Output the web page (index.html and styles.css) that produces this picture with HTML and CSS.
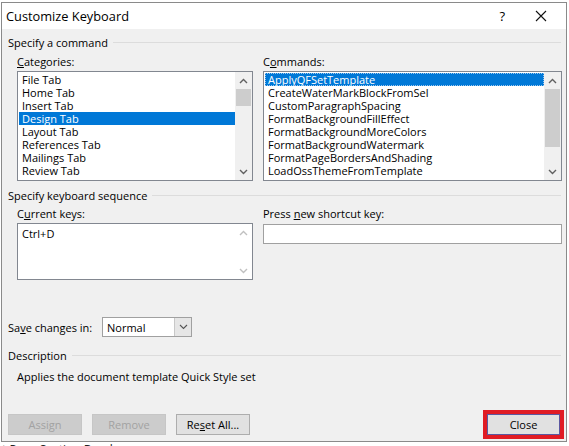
FILE: index.html
```html
<!DOCTYPE html>
<html>
<head>
<meta charset="utf-8">
<link rel="stylesheet" href="styles.css">
</head>
<body>
<div class="screen">
  <div class="window">
    <div class="titlebar">
      <span class="title">Customize Keyboard</span>
      <span class="help">?</span>
      <svg class="closex" width="12" height="12" viewBox="0 0 12 12"><path d="M1 1 L11 11 M11 1 L1 11" stroke="#111" stroke-width="1.1" fill="none"/></svg>
    </div>
    <div class="body">
      <div class="group g1"><span>Specify a command</span><i></i></div>
      <div class="cols">
        <div class="col">
          <div class="label"><u>C</u>ategories:</div>
          <div class="list tall">
            <div class="items">
              <div class="item">File Tab</div>
              <div class="item">Home Tab</div>
              <div class="item">Insert Tab</div>
              <div class="item sel">Design Tab</div>
              <div class="item">Layout Tab</div>
              <div class="item">References Tab</div>
              <div class="item">Mailings Tab</div>
              <div class="item">Review Tab</div>
            </div>
            <div class="sbar">
              <div class="arrow"><svg width="9" height="6" viewBox="0 0 9 6"><path d="M1 5 L4.5 1.5 L8 5" stroke="#606060" stroke-width="1.4" fill="none"/></svg></div>
              <div class="track"><div class="thumb small"></div></div>
              <div class="arrow"><svg width="9" height="6" viewBox="0 0 9 6"><path d="M1 1 L4.5 4.5 L8 1" stroke="#606060" stroke-width="1.4" fill="none"/></svg></div>
            </div>
          </div>
        </div>
        <div class="col">
          <div class="label">C<u>o</u>mmands:</div>
          <div class="list tall">
            <div class="items">
              <div class="item sel focus">ApplyQFSetTemplate</div>
              <div class="item">CreateWaterMarkBlockFromSel</div>
              <div class="item">CustomParagraphSpacing</div>
              <div class="item">FormatBackgroundFillEffect</div>
              <div class="item">FormatBackgroundMoreColors</div>
              <div class="item">FormatBackgroundWatermark</div>
              <div class="item">FormatPageBordersAndShading</div>
              <div class="item">LoadOssThemeFromTemplate</div>
            </div>
            <div class="sbar">
              <div class="arrow"><svg width="9" height="6" viewBox="0 0 9 6"><path d="M1 5 L4.5 1.5 L8 5" stroke="#606060" stroke-width="1.4" fill="none"/></svg></div>
              <div class="track"><div class="thumb big"></div></div>
              <div class="arrow"><svg width="9" height="6" viewBox="0 0 9 6"><path d="M1 1 L4.5 4.5 L8 1" stroke="#606060" stroke-width="1.4" fill="none"/></svg></div>
            </div>
          </div>
        </div>
      </div>

      <div class="group g2"><span>Specify keyboard sequence</span><i></i></div>
      <div class="cols keys">
        <div class="col">
          <div class="label">C<u>u</u>rrent keys:</div>
          <div class="list short">
            <div class="items">
              <div class="item">Ctrl+D</div>
            </div>
            <div class="sbar plain">
              <div class="arrow"><svg width="9" height="6" viewBox="0 0 9 6"><path d="M1 5 L4.5 1.5 L8 5" stroke="#c0c0c0" stroke-width="1.4" fill="none"/></svg></div>
              <div class="track"></div>
              <div class="arrow"><svg width="9" height="6" viewBox="0 0 9 6"><path d="M1 1 L4.5 4.5 L8 1" stroke="#c0c0c0" stroke-width="1.4" fill="none"/></svg></div>
            </div>
          </div>
        </div>
        <div class="col">
          <div class="label">Press <u>n</u>ew shortcut key:</div>
          <div class="input"></div>
        </div>
      </div>

      <div class="saverow">
        <span class="savelabel">Sa<u>v</u>e changes in:</span>
        <div class="select">
          <span class="selval">Normal</span>
          <span class="dd"><svg width="9" height="6" viewBox="0 0 9 6"><path d="M1 1 L4.5 4.5 L8 1" stroke="#555" stroke-width="1.1" fill="none"/></svg></span>
        </div>
      </div>

      <div class="group g3"><span>Description</span><i></i></div>
      <div class="desc">Applies the document template Quick Style set</div>

      <div class="buttons">
        <div class="left">
          <div class="btn disabled">Assign</div>
          <div class="btn disabled">Remove</div>
          <div class="btn">Re<u>s</u>et All...</div>
        </div>
        <div class="btn close">Close</div>
      </div>
    </div>
  </div>
  <div class="behind">t Page Section Breaks</div>
</div>
</body>
</html>
```

FILE: styles.css
```css
* { box-sizing: border-box; }
html, body { margin: 0; padding: 0; background: #fff; }
.screen {
  width: 569px; height: 446px; overflow: hidden; background: #fff;
  font-family: "Open Sans", "Noto Sans", sans-serif; font-size: 11px; color: #000;
}
.window {
  margin: 2px 0 0 1px; width: 566px; height: 440px;
  border: 1px solid #8a8a8a; display: flex; flex-direction: column;
}
.titlebar {
  height: 26px; background: #fff; display: flex; align-items: center; flex: none;
}
.title { font-size: 12.8px; padding-left: 4px; flex: 1; }
.help { font-size: 13px; margin-right: 30px; }
.closex { margin-right: 19px; }
.body { flex: 1; background: #f0f0f0; display: flex; flex-direction: column; padding-right: 5px; }

.group { display: flex; align-items: center; height: 16px; padding-left: 6px; }
.group i { flex: 1; height: 1px; background: #dcdcdc; margin-left: 5px; }
.g1 { margin-top: 5px; }
.g2 { margin-top: 6px; }
.g3 { margin-top: 10px; }

.cols { display: grid; grid-template-columns: 236px 299px; column-gap: 10px; padding-left: 15px; }
.label { height: 16px; line-height: 16px; margin-top: 4px; }
.keys .label { margin-top: 3px; }
.list {
  margin-top: 1px; background: #fff; border: 1px solid #828790; display: flex; padding: 1px 0 0 1px;
}
.list.tall { height: 110px; }
.list.short { height: 57px; }
.items { flex: 1; padding-top: 0; }
.item { height: 13px; line-height: 13px; padding-left: 3px; white-space: nowrap; }
.item.sel { background: #0078d7; color: #fff; }
.item.focus { outline: 1px dotted #9cc8ef; outline-offset: -1px; }
.short .item { line-height: 15px; height: 16px; margin-top: 1px; }

.sbar { width: 17px; display: flex; flex-direction: column; background: #f0f0f0; margin-top: -1px; }
.sbar.plain { background: #fff; }
.arrow { height: 17px; display: flex; align-items: center; justify-content: center; flex: none; }
.track { flex: 1; }
.thumb { background: #cdcdcd; margin: 0 1px; }
.thumb.small { height: 17px; }
.thumb.big { height: 58px; }

.input { margin-top: 2px; height: 20px; background: #fff; border: 1px solid #a0a0a0; }

.saverow { display: flex; align-items: center; padding-left: 6px; margin-top: 37px; height: 20px; }
.savelabel { width: 94px; }
.select {
  width: 90px; height: 20px; background: #fff; border: 1px solid #a0a0a0; display: flex; align-items: center;
}
.selval { flex: 1; padding-left: 4px; }
.dd {
  width: 17px; height: 18px; background: #e6e6e6; border-left: 1px solid #c8c8c8;
  display: flex; align-items: center; justify-content: center;
}

.desc { margin-top: 6px; height: 16px; line-height: 16px; padding-left: 15px; }

.buttons {
  display: flex; justify-content: space-between; align-items: center;
  margin-top: 29px; padding-left: 6px; padding-right: 1px;
}
.left { display: flex; gap: 10px; }
.btn {
  width: 74px; height: 21px; display: flex; align-items: center; justify-content: center;
  background: #e1e1e1; border: 1px solid #adadad;
}
.btn.disabled { background: #cccccc; border-color: #c6c6c6; color: #a2a2a2; }
.btn.close { width: 73px; border-color: #5b57a0; outline: 4px solid #e01b24; outline-offset: 0; }

.behind { font-size: 12px; padding-left: 2px; margin-top: 1px; color: #222; line-height: 14px; }
```
